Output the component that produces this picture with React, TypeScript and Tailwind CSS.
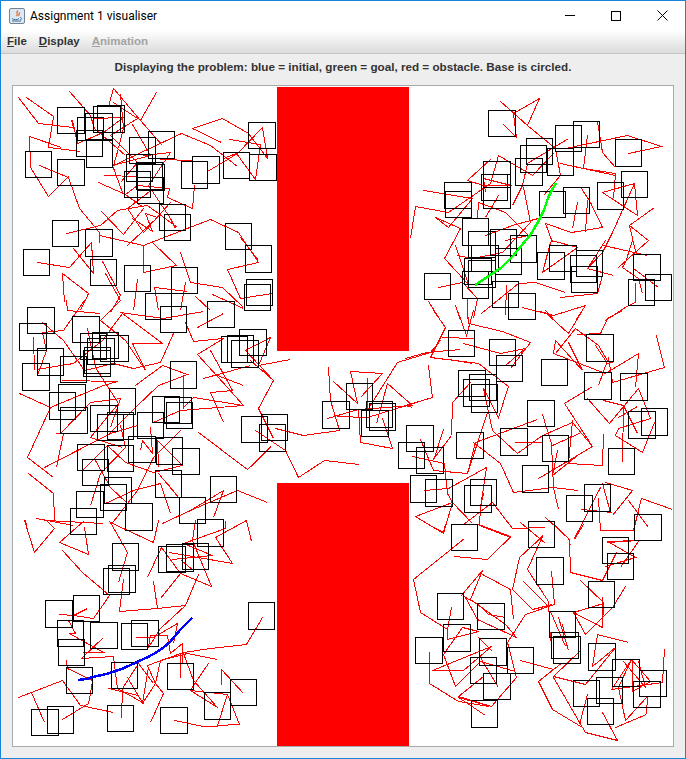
const crops: { ox: number; oy: number; squares: number[][]; lines: number[][] }[] = [
  {
    ox: 10,
    oy: 85,
    squares: [
      [142, 67, 224, 145], [250, 64, 330, 143], [262, 61, 344, 141], [225, 85, 307, 163], [202, 95, 280, 165],
      [199, 135, 278, 214], [229, 165, 308, 247], [415, 139, 493, 220], [358, 157, 437, 236], [349, 208, 428, 288],
      [378, 230, 455, 310], [381, 238, 461, 315], [343, 259, 422, 338], [382, 275, 461, 352], [46, 199, 125, 277],
      [142, 223, 224, 301], [514, 229, 592, 310], [547, 214, 629, 295], [640, 202, 719, 280], [715, 112, 797, 190],
      [718, 208, 800, 286], [448, 358, 527, 436], [463, 388, 541, 466], [127, 406, 205, 484], [226, 433, 307, 514],
      [40, 493, 118, 571], [241, 522, 320, 601], [343, 541, 421, 619], [484, 547, 562, 625], [646, 415, 724, 493],
      [706, 481, 784, 562], [709, 583, 787, 661], [703, 598, 781, 676],
    ],
    lines: [
      [25, 37, 84, 115, 190, 125, 184, 105, 195, 145],
      [49, 37, 130, 92, 115, 186, 211, 199],
      [154, 186, 58, 152, 61, 245, 113, 332, 175, 272],
      [88, 240, 175, 275, 207, 368, 268, 440, 268, 472],
      [178, 18, 240, 90, 253, 130, 345, 210],
      [295, 62, 309, 10, 390, 105, 437, 22],
      [390, 105, 455, 180],
      [330, 28, 340, 130, 325, 190, 310, 240],
      [545, 128, 637, 100, 715, 145, 772, 220, 755, 125, 680, 205, 590, 257],
      [545, 128, 632, 172],
      [658, 163, 750, 178, 735, 282, 678, 205, 640, 220],
      [310, 240, 513, 145, 600, 180, 680, 242],
      [450, 222, 545, 224],
      [553, 300, 547, 370, 470, 335, 478, 310, 380, 300, 345, 327, 265, 292],
      [283, 270, 380, 272],
      [168, 445, 270, 420, 320, 376, 410, 360, 500, 425],
      [272, 378, 340, 448, 400, 370],
      [400, 480, 600, 403, 685, 440, 745, 530, 650, 553, 690, 640, 785, 625],
      [268, 450, 400, 480, 398, 560, 497, 540, 425, 470],
      [190, 490, 250, 565, 242, 470, 178, 547, 82, 532],
      [210, 675, 235, 625, 155, 565, 162, 650],
      [275, 528, 330, 630, 300, 680],
      [350, 480, 440, 395, 405, 385, 425, 437, 365, 400],
      [511, 500, 540, 590, 635, 607, 700, 665],
      [382, 583, 370, 675],
      [530, 617, 433, 605, 445, 675],
      [525, 590, 510, 675],
      [555, 632, 600, 675],
      [605, 628, 700, 670],
      [690, 455, 745, 525],
      [285, 565, 330, 645],
      [185, 105, 200, 175, 280, 140, 340, 95, 250, 100],
      [365, 118, 420, 210, 305, 240, 335, 320, 400, 365],
      [310, 50, 380, 100, 300, 150, 380, 230, 330, 290],
      [400, 210, 480, 200, 415, 300, 480, 400, 495, 430],
      [480, 350, 400, 440, 350, 370, 430, 310],
    ],
  },
  {
    ox: 10,
    oy: 300,
    squares: [
      [52, 22, 133, 100], [28, 70, 110, 151], [187, 49, 269, 127], [209, 100, 287, 178], [245, 95, 323, 172],
      [269, 106, 353, 184], [232, 115, 313, 193], [222, 140, 300, 218], [220, 150, 302, 229], [82, 145, 160, 226],
      [37, 190, 119, 271], [149, 169, 227, 247], [481, 184, 559, 265], [145, 253, 226, 331], [118, 277, 196, 358],
      [151, 320, 232, 397], [298, 265, 377, 343], [241, 316, 323, 394], [260, 343, 338, 420], [290, 335, 368, 415],
      [382, 337, 461, 415], [427, 289, 509, 367], [461, 290, 541, 367], [469, 305, 548, 382], [355, 409, 436, 488],
      [439, 412, 518, 493], [485, 443, 565, 520], [202, 431, 283, 508], [292, 436, 370, 514], [217, 478, 296, 557],
      [436, 511, 515, 592], [283, 532, 364, 610], [271, 553, 350, 631], [197, 574, 277, 652], [181, 625, 260, 703],
      [346, 610, 428, 690], [601, 529, 679, 607], [508, 592, 587, 670], [562, 658, 640, 738], [591, 4, 671, 82],
      [634, 108, 712, 186], [652, 106, 730, 186], [662, 120, 743, 202], [688, 88, 768, 166], [406, -20, 485, 58],
      [451, 19, 530, 97],
    ],
    lines: [
      [167, 0, 170, 30, 270, 40],
      [222, 0, 160, 90, 95, 95, 108, 150, 80, 225],
      [95, 65, 160, 120, 222, 210, 310, 190, 370, 205, 450, 185, 490, 100],
      [70, 110, 72, 210],
      [82, 207, 190, 190, 275, 120, 335, 40, 455, 130, 365, 130, 405, 210],
      [28, 280, 120, 320, 52, 472, 130, 530],
      [120, 320, 280, 255, 320, 243, 155, 240],
      [102, 500, 300, 400, 380, 375],
      [137, 500, 160, 400, 135, 400],
      [55, 520, 130, 580, 132, 660],
      [330, 35, 460, 55, 580, 33],
      [330, 0, 270, 60, 345, 120, 405, 210],
      [375, 255, 455, 195, 530, 222, 445, 255, 375, 320, 298, 400],
      [560, 80, 640, 40],
      [525, 65, 550, 122, 640, 115, 560, 162, 650, 260, 700, 315, 550, 290, 520, 322],
      [600, 150, 665, 270, 600, 275, 638, 365],
      [580, 233, 720, 195],
      [620, 225, 700, 255],
      [745, 325, 788, 240, 705, 150, 780, 110, 745, 195],
      [430, 365, 510, 330, 700, 315],
      [565, 397, 710, 508, 780, 438],
      [520, 225, 520, 325],
      [455, 670, 540, 630, 640, 570, 610, 650],
      [772, 605, 680, 570, 540, 630],
      [45, 660, 48, 675],
      [78, 655, 190, 675],
      [510, 390, 430, 470, 380, 570, 300, 675],
      [215, 510, 290, 435, 345, 485, 430, 515, 515, 495, 440, 420, 445, 500],
      [230, 85, 255, 200, 325, 310, 240, 410, 335, 440],
      [150, 400, 240, 305, 330, 295, 300, 380],
      [330, 375, 345, 440, 270, 520, 240, 615],
      [420, 380, 425, 460, 395, 420, 390, 450],
      [255, 480, 300, 560, 350, 610, 285, 610, 370, 570, 450, 550, 480, 640],
      [445, 520, 505, 590, 470, 550],
    ],
  },
  {
    ox: 10,
    oy: 520,
    squares: [
      [307, 70, 386, 151], [445, 79, 527, 157], [469, 73, 550, 154], [517, 70, 596, 148], [295, 136, 377, 217],
      [280, 145, 359, 223], [190, 226, 269, 304], [106, 241, 188, 322], [715, 247, 793, 328], [142, 301, 221, 379],
      [241, 307, 323, 385], [334, 310, 412, 388], [364, 301, 446, 379], [145, 358, 224, 436], [169, 442, 247, 520],
      [304, 427, 382, 505], [472, 430, 550, 508], [661, 478, 739, 556], [583, 517, 661, 598], [112, 559, 190, 640],
      [64, 568, 145, 646], [292, 556, 370, 634], [451, 562, 532, 640],
    ],
    lines: [
      [43, 0, 72, 95, 133, 25, 108, 0],
      [108, 0, 280, 10],
      [222, 0, 147, 65, 235, 103, 222, 20],
      [155, 90, 215, 155, 297, 225, 250, 295, 190, 285, 230, 265],
      [148, 283, 190, 285],
      [323, 185, 350, 95, 300, 5, 428, 65, 445, 0],
      [410, 170, 452, 80, 510, 160, 602, 198, 545, 60, 555, 0],
      [430, 183, 441, 265, 328, 273, 338, 178],
      [451, 233, 510, 160],
      [563, 163, 525, 255, 441, 265],
      [478, 95, 667, 130, 615, 50, 707, 0, 722, 62],
      [487, 118, 607, 105, 520, 70, 645, 25, 645, 0],
      [512, 120, 550, 150],
      [525, 255, 450, 325, 415, 380, 420, 345, 470, 345, 480, 400, 515, 370, 515, 430],
      [755, 290, 708, 372, 600, 385, 520, 395, 410, 435, 435, 490, 460, 520, 420, 607],
      [620, 418, 530, 400, 450, 420, 435, 490, 395, 550, 415, 440],
      [375, 350, 430, 350, 500, 310, 490, 370],
      [280, 350, 213, 415, 310, 408, 320, 505, 395, 545, 350, 470],
      [178, 340, 280, 395, 215, 395],
      [167, 420, 170, 445, 245, 480, 240, 520, 235, 548, 155, 598],
      [25, 532, 155, 480, 210, 555, 310, 577],
      [62, 515, 103, 605],
      [332, 595, 335, 505, 385, 430, 430, 490],
      [295, 505, 385, 525],
      [510, 470, 510, 400],
      [593, 430, 550, 495, 540, 510, 622, 560, 548, 480, 520, 400],
      [632, 492, 632, 447, 700, 518],
      [540, 510, 650, 522, 622, 615, 688, 612, 650, 522],
      [492, 600, 580, 618, 622, 618],
      [175, 300, 195, 340, 180, 340],
    ],
  },
  {
    ox: 405,
    oy: 85,
    squares: [
      [250, 76, 331, 154], [505, 109, 583, 187], [451, 121, 529, 199], [364, 160, 442, 238], [346, 181, 425, 262],
      [427, 190, 505, 271], [631, 163, 709, 244], [331, 220, 412, 301], [235, 229, 316, 307], [229, 268, 307, 346],
      [235, 268, 317, 370], [118, 292, 199, 370], [121, 319, 199, 397], [649, 259, 727, 337], [577, 292, 655, 373],
      [475, 307, 553, 385], [403, 319, 481, 397], [172, 400, 250, 481], [190, 439, 271, 517], [256, 433, 335, 511],
      [316, 451, 394, 532], [199, 481, 280, 559], [271, 490, 349, 568], [178, 520, 259, 598], [190, 526, 271, 607],
      [172, 559, 250, 640], [397, 502, 478, 583], [433, 481, 514, 559], [514, 496, 592, 574], [496, 511, 574, 592],
      [499, 544, 577, 622], [685, 508, 766, 586], [721, 568, 799, 646], [670, 583, 748, 661], [58, 565, 136, 643],
      [262, 589, 340, 667], [310, 625, 391, 703],
    ],
    lines: [
      [286, 48, 365, 120, 403, 38, 325, 85, 333, 155, 293, 118],
      [365, 120, 450, 190, 465, 270, 415, 330],
      [490, 160, 365, 235, 350, 300, 320, 360],
      [545, 150, 535, 250, 630, 265, 625, 340],
      [575, 108, 590, 200, 630, 245],
      [480, 188, 665, 150, 767, 183, 670, 205],
      [465, 233, 630, 270],
      [590, 322, 687, 295, 697, 390, 590, 322],
      [687, 295, 620, 440, 590, 500, 545, 550],
      [528, 310, 555, 350, 590, 425, 497, 440, 420, 415, 440, 470],
      [748, 365, 672, 420, 728, 465, 640, 545],
      [672, 420, 693, 510],
      [55, 316, 200, 340, 130, 427, 90, 397, 165, 430, 118, 520, 190, 598, 150, 480],
      [15, 458, 30, 362, 130, 380, 255, 295, 280, 210, 380, 270, 445, 205],
      [258, 220, 187, 285, 235, 300, 318, 300, 235, 280, 240, 320],
      [278, 330, 240, 395],
      [515, 350, 500, 430],
      [545, 345, 540, 440],
      [437, 465, 515, 485, 410, 560, 437, 465],
      [600, 465, 545, 550, 625, 570],
      [595, 480, 725, 510],
      [680, 465, 660, 530, 650, 545, 700, 580, 710, 625],
      [685, 550, 760, 605],
      [690, 590, 690, 650, 670, 660, 600, 705],
      [100, 605, 170, 590, 215, 640, 205, 700],
      [187, 640, 187, 700],
      [150, 660, 165, 705],
      [68, 648, 105, 705],
      [228, 685, 340, 595, 390, 590, 480, 620],
      [465, 637, 575, 625, 590, 570],
      [302, 600, 300, 690],
      [350, 665, 445, 690, 540, 660, 510, 705],
      [420, 675, 445, 700],
      [300, 465, 370, 450, 300, 380, 220, 350, 215, 400],
      [355, 305, 375, 410, 290, 500, 200, 520, 155, 510],
      [240, 450, 320, 420, 375, 405, 400, 400],
      [435, 470, 410, 560],
    ],
  },
  {
    ox: 405,
    oy: 310,
    squares: [
      [130, 61, 208, 139], [253, 88, 331, 166], [274, 136, 352, 214], [409, 148, 487, 226], [544, 73, 625, 154],
      [538, 187, 619, 268], [646, 190, 727, 271], [160, 181, 241, 259], [193, 193, 274, 271], [175, 208, 253, 289],
      [199, 223, 277, 307], [367, 271, 448, 349], [670, 304, 751, 385], [709, 295, 787, 376], [4, 346, 85, 424],
      [-20, 397, 58, 475], [34, 412, 115, 490], [154, 367, 235, 445], [286, 355, 367, 436], [412, 376, 490, 454],
      [610, 415, 688, 493], [352, 466, 430, 547], [16, 496, 94, 577], [61, 508, 142, 589], [196, 508, 274, 586],
      [178, 526, 259, 607], [538, 523, 616, 604], [484, 556, 562, 634], [688, 613, 769, 691], [139, 643, 217, 721],
      [370, 634, 448, 712], [592, 682, 670, 760],
    ],
    lines: [
      [85, 0, 120, 52, 75, 140, 220, 160, 308, 228, 278, 320, 235, 235],
      [0, 145, 62, 125, 165, 118],
      [155, 0, 183, 75, 205, 0],
      [187, 0, 190, 40, 290, 62, 375, 97, 315, 175],
      [110, 80, 208, 85],
      [175, 100, 285, 130, 360, 115, 300, 165],
      [70, 165, 80, 262, 0, 285, 20, 290],
      [130, 148, 200, 160],
      [195, 215, 140, 275, 138, 375, 82, 450],
      [45, 388, 85, 480, 185, 490, 210, 395, 395, 327],
      [115, 358, 85, 450],
      [22, 437, 118, 460, 125, 550, 140, 575, 115, 668, 30, 618, 140, 575],
      [235, 235, 260, 360, 335, 428, 410, 375, 500, 335, 560, 408, 398, 505, 515, 435, 440, 495, 455, 420],
      [327, 397, 410, 395],
      [205, 395, 285, 460, 325, 545, 440, 530, 520, 540],
      [245, 305, 185, 490],
      [243, 472, 130, 535, 58, 540],
      [243, 472, 225, 590, 222, 645, 315, 680, 290, 705],
      [235, 550, 225, 590],
      [140, 575, 200, 640],
      [175, 643, 260, 575, 320, 655, 420, 652],
      [345, 637, 420, 700],
      [410, 675, 380, 705],
      [420, 622, 490, 685, 495, 705],
      [410, 312, 438, 400, 445, 530, 458, 597],
      [527, 365, 440, 405],
      [500, 330, 490, 460, 590, 465, 595, 370],
      [478, 280, 560, 408],
      [478, 280, 560, 228],
      [547, 265, 612, 338, 700, 235, 735, 325, 640, 355, 630, 375, 710, 427, 748, 337],
      [595, 270, 655, 285, 695, 370],
      [655, 285, 650, 455],
      [695, 288, 640, 320],
      [530, 180, 450, 90, 445, 130, 600, 190, 700, 130, 690, 230],
      [490, 95, 530, 180],
      [450, 130, 510, 55, 580, 105, 605, 150, 580, 225],
      [530, 0, 490, 70, 420, 5, 380, 0],
      [515, 72, 585, 70, 605, 25, 650, 0],
      [570, 105, 607, 160, 625, 155],
      [752, 75, 778, 170, 620, 215, 610, 140],
      [600, 515, 680, 540, 620, 615],
      [590, 520, 615, 605],
      [585, 530, 508, 685],
      [527, 598, 620, 605],
      [580, 565, 585, 660, 685, 660, 708, 565, 800, 598],
      [670, 570, 728, 652],
      [605, 695, 703, 690],
    ],
  },
  {
    ox: 405,
    oy: 524,
    squares: [
      [607, 88, 685, 166], [394, 100, 475, 181], [550, 172, 628, 250], [97, 208, 175, 286], [217, 236, 298, 313],
      [115, 301, 196, 382], [31, 340, 113, 418], [223, 343, 304, 424], [307, 370, 385, 448], [196, 400, 274, 478],
      [235, 448, 316, 526], [199, 529, 277, 610], [433, 262, 511, 340], [439, 325, 520, 403], [445, 337, 526, 418],
      [550, 358, 631, 439], [622, 406, 703, 487], [703, 439, 784, 517], [685, 472, 766, 550], [505, 469, 583, 547],
      [574, 460, 652, 538], [547, 523, 625, 601],
    ],
    lines: [
      [178, 43, 25, 165, 45, 265, 125, 315, 125, 345, 220, 320, 170, 310],
      [148, 95, 245, 105, 315, 37, 220, 0],
      [70, 0, 115, 25, 120, 0],
      [410, 35, 342, 100, 320, 195, 380, 255, 440, 240],
      [410, 35, 365, 135, 430, 230, 435, 350],
      [232, 137, 165, 217],
      [232, 150, 315, 195, 325, 285],
      [232, 137, 195, 225, 300, 300, 333, 340, 217, 285, 180, 220, 220, 240, 250, 270, 300, 280],
      [353, 172, 430, 245],
      [437, 140, 448, 240, 360, 270, 305, 355, 332, 458, 257, 545, 160, 517, 235, 455],
      [137, 250, 127, 315],
      [240, 572, 160, 518, 235, 540],
      [73, 380, 73, 478, 160, 530, 253, 545],
      [80, 438, 258, 365, 175, 438, 80, 438],
      [115, 390, 150, 485, 225, 410, 330, 440],
      [170, 310, 115, 390],
      [218, 340, 262, 382],
      [225, 400, 278, 488],
      [345, 408, 445, 435, 470, 413],
      [400, 472, 445, 435],
      [525, 378, 445, 455, 540, 480, 630, 370, 560, 425, 575, 330, 668, 355],
      [445, 460, 530, 608, 440, 555, 400, 472],
      [530, 608, 540, 625, 635, 648, 590, 565],
      [525, 168, 595, 235, 590, 310, 505, 265],
      [590, 215, 590, 310],
      [660, 185, 620, 250, 540, 330, 505, 265, 595, 238],
      [447, 0, 493, 45, 495, 145, 590, 168, 632, 85],
      [533, 0, 508, 45],
      [605, 50, 690, 100, 600, 125],
      [700, 50, 645, 130],
      [605, 50, 703, 47],
      [435, 262, 480, 365],
      [460, 280, 488, 378],
      [470, 300, 480, 340],
      [630, 610, 722, 570, 727, 515, 660, 588, 640, 490, 678, 405, 735, 470, 680, 500, 680, 405],
      [778, 375, 772, 475, 617, 495, 678, 405],
      [545, 510, 522, 600],
      [700, 410, 720, 490, 655, 410],
    ],
  },
  {
    ox: 250,
    oy: 340,
    squares: [
      [289, 130, 367, 208], [217, 184, 298, 265], [349, 184, 427, 262], [358, 190, 436, 271], [334, 211, 415, 289],
      [34, 223, 112, 301], [28, 253, 106, 334], [-26, 229, 52, 307],
    ],
    lines: [
      [233, 82, 240, 180, 268, 270, 160, 285, 75, 265],
      [250, 122, 320, 190, 300, 92, 397, 100, 330, 170],
      [350, 110, 350, 210],
      [232, 235, 325, 208, 330, 305, 427, 325, 397, 235],
      [325, 208, 485, 195, 410, 130, 377, 250],
      [535, 75, 545, 170, 350, 230, 260, 228],
      [120, 58, 25, 75],
      [0, 60, 68, 120, 25, 205, 68, 295],
      [15, 270, 105, 330, 145, 410, 222, 360, 327, 373],
      [60, 320, 0, 380],
      [355, 205, 440, 65, 540, 35, 570, 0],
    ],
  },
]

// crop pixels are 3x, page pixels are what we want
const toPagePath = (ox: number, oy: number, pts: number[]) => {
  let d = ""
  for (let i = 0; i < pts.length; i += 2) {
    const x = Math.round(ox + pts[i] / 3) + 0.5
    const y = Math.round(oy + pts[i + 1] / 3) + 0.5
    d += `${i === 0 ? "M" : "L"}${x} ${y}`
  }
  return d
}

const Visualiser = () => (
  <svg viewBox="13 86 660 660" shapeRendering="crispEdges" className="block w-full h-full">
    {crops.flatMap((c, ci) =>
      c.lines.map((l, i) => (
        <path key={`l${ci}-${i}`} d={toPagePath(c.ox, c.oy, l)} fill="none" stroke="#ff0000" strokeWidth="1" />
      ))
    )}
    {crops.flatMap((c, ci) =>
      c.squares.map((s, i) => (
        <rect
          key={`s${ci}-${i}`}
          x={Math.round(c.ox + s[0] / 3) + 0.5}
          y={Math.round(c.oy + s[1] / 3) + 0.5}
          width={Math.round((s[2] - s[0]) / 3)}
          height={Math.round((s[3] - s[1]) / 3)}
          fill="none"
          stroke="#000000"
          strokeWidth="1"
        />
      ))
    )}
    <rect x="277" y="87" width="132" height="264" fill="#ff0000" />
    <rect x="277" y="483" width="132" height="263" fill="#ff0000" />
    <path
      d="M78 680 L86 679 L93 677 L102 675 L110 673 L124 668 L137 662 L148 657 L157 652 L164 647 L170 642 L175 636 L180 630 L186 624 L192 618"
      fill="none"
      stroke="#0000ff"
      strokeWidth="2.5"
    />
    <path
      d="M475 285 L489 276 L502 267 L513 256 L522 245 L531 234 L538 222 L544 210 L548 198 L552 190 L556 183"
      fill="none"
      stroke="#00ff00"
      strokeWidth="2.5"
    />
  </svg>
)

const JavaIcon = () => (
  <svg width="16" height="16" viewBox="0 0 16 16" className="shrink-0">
    <rect x="0.5" y="0.5" width="15" height="15" rx="1.5" fill="#dfe8f0" stroke="#6f8397" />
    <path d="M3 10.5c1 1.5 6 1.5 7 0M11 9.5c2 0 2 2 0 2.5" stroke="#3f6f9f" strokeWidth="1" fill="none" />
    <path d="M3 13h9" stroke="#3f6f9f" strokeWidth="1" fill="none" />
    <path d="M9 2.5c-3 2 1 3-1.5 5.5M11 4.5c-2 1 0 2-1.5 3.5" stroke="#e0682f" strokeWidth="1.2" fill="none" />
  </svg>
)

export default function App() {
  return (
    <div className="w-[686px] h-[759px] flex flex-col border border-[#1883d7] bg-[#eeeeee] overflow-hidden">
      {/* Title bar */}
      <div className="h-[29px] shrink-0 bg-white flex items-center pl-[8px] gap-[5px]">
        <JavaIcon />
        <span className="text-[12px] text-black font-['Roboto',sans-serif]">Assignment 1 visualiser</span>
        <div className="ml-auto flex items-center h-full">
          <div className="w-[46px] flex justify-center">
            <div className="w-[10px] h-px bg-black" />
          </div>
          <div className="w-[46px] flex justify-center">
            <div className="w-[10px] h-[10px] border border-black" />
          </div>
          <div className="w-[46px] flex justify-center">
            <svg width="11" height="11" viewBox="0 0 11 11" fill="none" stroke="#000" strokeWidth="1">
              <path d="M0.5 0.5L10.5 10.5M10.5 0.5L0.5 10.5" />
            </svg>
          </div>
        </div>
      </div>
      {/* Menu bar */}
      <div className="h-[24px] shrink-0 flex items-center pl-[6px] gap-[12px] bg-gradient-to-b from-white to-[#dcdcdc] border-b border-[#c4c4c4] font-['Liberation_Sans',sans-serif] font-bold text-[11.5px] text-[#333333]">
        <span>
          <span className="underline">F</span>ile
        </span>
        <span>
          <span className="underline">D</span>isplay
        </span>
        <span className="text-[#a3a3a3]">
          <span className="underline">A</span>nimation
        </span>
      </div>
      {/* Status label */}
      <div className="h-[31px] shrink-0 pt-[5px] text-center leading-[16px] font-['Liberation_Sans',sans-serif] font-bold text-[11.7px] text-[#333333]">
        Displaying the problem: blue = initial, green = goal, red = obstacle. Base is circled.
      </div>
      {/* Canvas */}
      <div className="ml-[11px] w-[662px] h-[662px] shrink-0 border border-[#aaaaaa] bg-white">
        <Visualiser />
      </div>
    </div>
  )
}
